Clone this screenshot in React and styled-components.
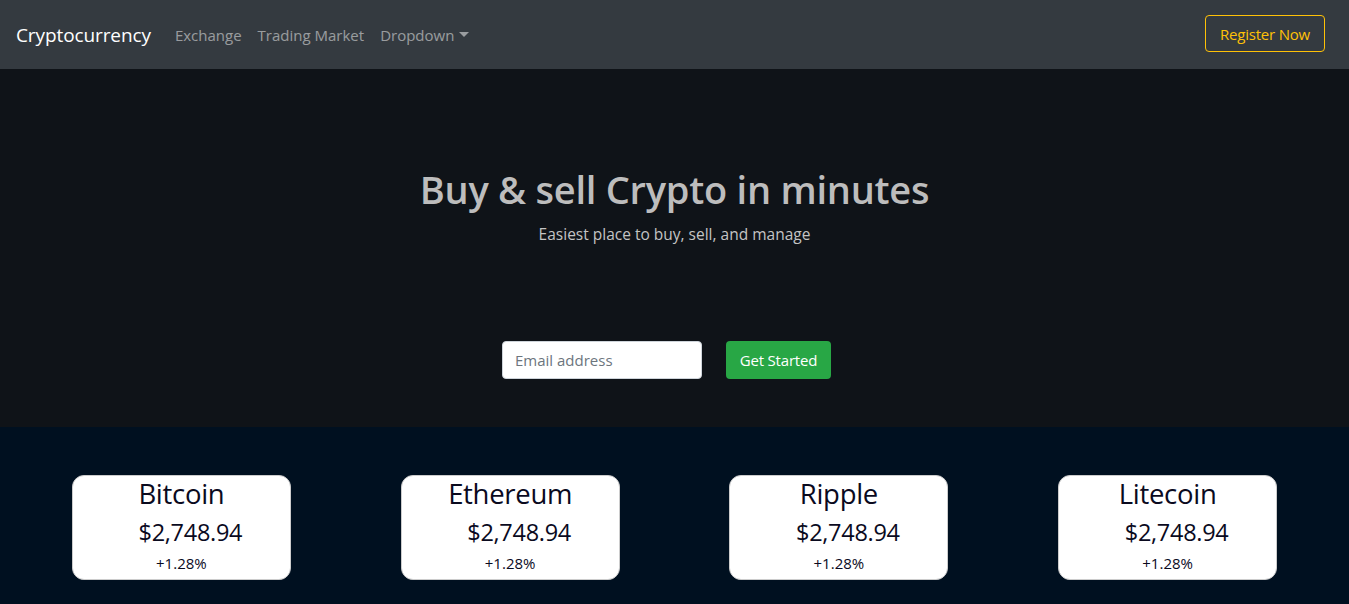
import styled, { createGlobalStyle } from 'styled-components';

const coins = ['Bitcoin', 'Ethereum', 'Ripple', 'Litecoin'];

function App() {
    return (
        <Page>
            <GlobalStyle />
            <Navbar>
                <Brand>Cryptocurrency</Brand>
                <NavLinks>
                    <NavLink>Exchange</NavLink>
                    <NavLink>Trading Market</NavLink>
                    <NavLink>Dropdown<Caret /></NavLink>
                </NavLinks>
                <RegisterButton>Register Now</RegisterButton>
            </Navbar>
            <Hero>
                <Title>Buy &amp; sell Crypto in minutes</Title>
                <Subtitle>Easiest place to buy, sell, and manage</Subtitle>
                <SignupForm>
                    <EmailInput placeholder="Email address" />
                    <StartButton>Get Started</StartButton>
                </SignupForm>
            </Hero>
            <Market>
                {coins.map((coin) => (
                    <CardCell key={coin}>
                        <Card>
                            <CoinName>{coin}</CoinName>
                            <Price>$2,748.94</Price>
                            <Change>+1.28%</Change>
                        </Card>
                    </CardCell>
                ))}
            </Market>
        </Page>
    );
}

const GlobalStyle = createGlobalStyle`
body
{
    margin:0;
    font-family:"Open Sans", "Noto Sans", sans-serif;
    background:#001020;
}
*
{
    box-sizing:border-box;
}
`;

const Page = styled.div`
min-height:604px;
background:#001020;
`;

const Navbar = styled.nav`
height:69px;
background:#343a40;
display:flex;
align-items:center;
padding:0 24px 0 16px;
`;

const Brand = styled.a`
font-size:19px;
color:#fff;
margin-right:16px;
letter-spacing:-0.1px;
`;

const NavLinks = styled.div`
display:flex;
flex:1;
`;

const NavLink = styled.a`
font-size:15px;
color:rgba(255,255,255,.5);
padding:0 8px;
display:flex;
align-items:center;
`;

const Caret = styled.span`
display:inline-block;
margin-left:5px;
border-top:5px solid rgba(255,255,255,.5);
border-left:5px solid transparent;
border-right:5px solid transparent;
`;

const RegisterButton = styled.button`
font-family:inherit;
font-size:15px;
color:#ffc107;
background:transparent;
border:1px solid #ffc107;
border-radius:4px;
width:120px;
height:37px;
margin-top:-2px;
letter-spacing:-0.2px;
`;

const Hero = styled.section`
height:358px;
background:#0f1318;
display:flex;
flex-direction:column;
align-items:center;
padding-top:96px;
`;

const Title = styled.h1`
margin:0;
font-size:38px;
font-weight:600;
line-height:1.3;
color:#bdbdbd;
letter-spacing:-0.25px;
`;

const Subtitle = styled.p`
margin:9px 0 0;
font-size:15.5px;
color:#c4c4c4;
`;

const SignupForm = styled.div`
display:flex;
gap:24px;
margin-top:96px;
margin-right:16px;
`;

const EmailInput = styled.input`
width:200px;
height:38px;
padding:6px 12px;
font-family:inherit;
font-size:15px;
border:1px solid #ced4da;
border-radius:4px;
&::placeholder
{
    color:#6c757d;
}
`;

const StartButton = styled.button`
height:38px;
width:105px;
font-family:inherit;
font-size:15px;
color:#fff;
background:#28a745;
border:none;
border-radius:4px;
letter-spacing:-0.2px;
`;

const Market = styled.section`
display:grid;
grid-template-columns:repeat(4, 1fr);
padding:48px 17px 24px;
`;

const CardCell = styled.div`
display:flex;
justify-content:center;
`;

const Card = styled.div`
width:219px;
height:105px;
background:#fff;
border:1px solid #ccc;
border-radius:12px;
display:flex;
flex-direction:column;
align-items:center;
padding-top:1px;
color:#0a0a1e;
`;

const CoinName = styled.h3`
margin:0;
font-size:27.5px;
font-weight:400;
line-height:34px;
letter-spacing:-0.3px;
`;

const Price = styled.div`
margin-top:7px;
padding-left:18px;
font-size:23.5px;
line-height:29px;
letter-spacing:-0.3px;
`;

const Change = styled.div`
margin-top:5px;
font-size:15px;
line-height:22px;
`;

export default App;
